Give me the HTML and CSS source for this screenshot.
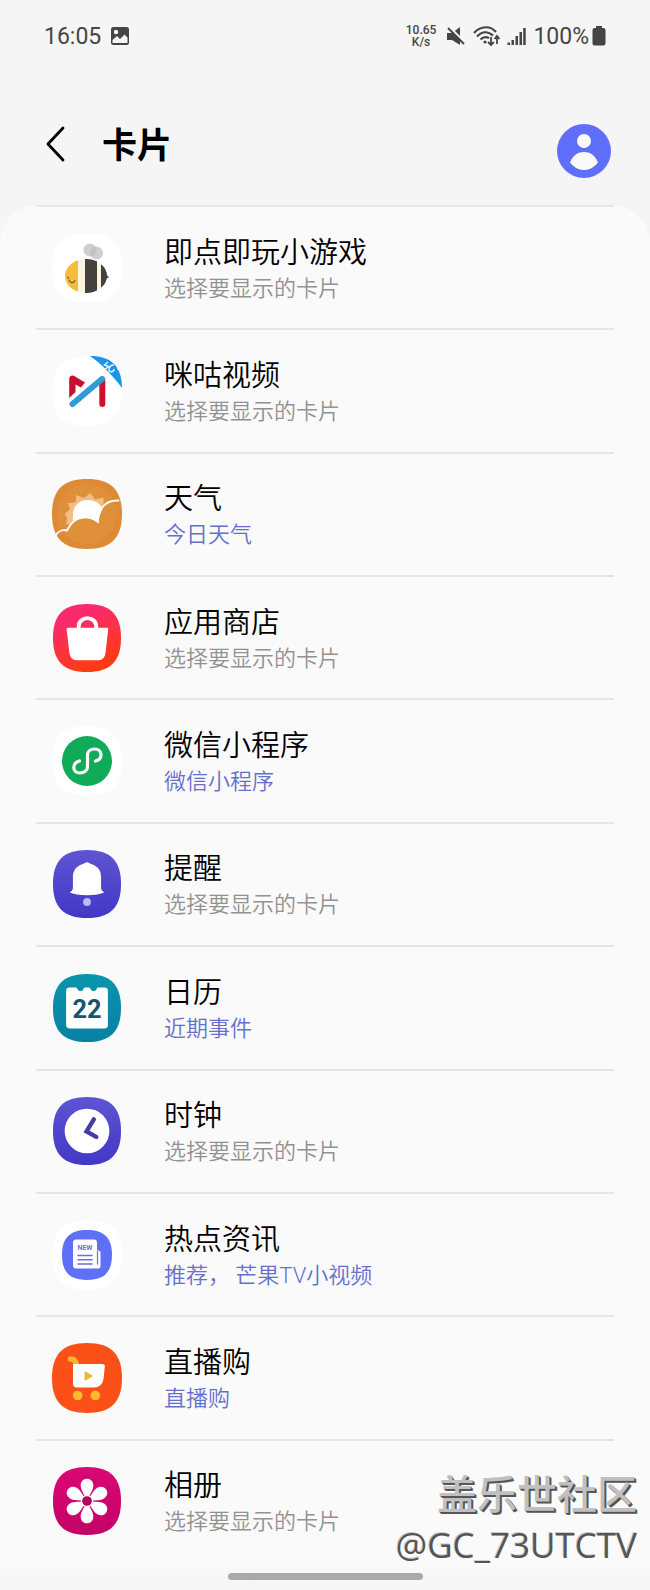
FILE: index.html
```
<!DOCTYPE html>
<html lang="zh-CN">
<head>
  <meta charset="UTF-8">
  <title>卡片</title>
  <meta name="viewport" content="width=device-width, initial-scale=1.0">
  <link rel="stylesheet" href="styles.css">
</head>
<body>

<svg class="defs" width="0" height="0" aria-hidden="true">
  <defs>
    <path id="squircle" d="M35 0C59 0 70 11 70 35S59 70 35 70 0 59 0 35 11 0 35 0Z"/>
    <clipPath id="beeClip"><ellipse cx="34" cy="43" rx="21" ry="17"/></clipPath>
    <clipPath id="sunClip"><path d="M0 0H70V21C60 21 53 25 50 31C48 35 47 38 46 43C36 37 26 38 20 45C17 48 16 50 15 51H0Z"/></clipPath>
    <linearGradient id="storeFill" x1="0" y1="0" x2="0.4" y2="1">
      <stop offset="0.3" stop-color="#fb2a6c"/>
      <stop offset="1" stop-color="#ff3b14"/>
    </linearGradient>
    <linearGradient id="indigoFill" x1="0" y1="0" x2="0" y2="1">
      <stop offset="0" stop-color="#5f54d2"/>
      <stop offset="1" stop-color="#4138c6"/>
    </linearGradient>
    <linearGradient id="tealFill" x1="0" y1="0" x2="0" y2="1">
      <stop offset="0" stop-color="#0a95ad"/>
      <stop offset="1" stop-color="#0781a3"/>
    </linearGradient>
    <linearGradient id="galleryFill" x1="0" y1="0" x2="0" y2="1">
      <stop offset="0" stop-color="#db0874"/>
      <stop offset="1" stop-color="#c30267"/>
    </linearGradient>
  </defs>
</svg>

<div class="screen">
  <div class="status-bar">
    <span class="clock">16:05</span>
    <svg width="20" height="20" viewBox="0 0 20 20">
      <rect x="1" y="1" width="18" height="18" rx="2.500" fill="#454545"/>
      <path d="M2.500 14L7 10l3 3 4.500-4.500 3 3V17H2.500Z" fill="#f5f5f5"/>
      <circle cx="6" cy="6" r="2.200" fill="#f5f5f5"/>
    </svg>
    <div class="status-right">
      <span class="speed"><span>10.65</span><span>K/s</span></span>
      <svg class="mute" width="20" height="20" viewBox="0 0 20 20">
        <path d="M1 7h5l8-6v18l-8-5H1Z" fill="#454545"/>
        <path d="M1-1L20 18" stroke="#f5f5f5" stroke-width="3"/>
        <path d="M2 2L18 18" stroke="#454545" stroke-width="2"/>
      </svg>
      <svg class="wifi" width="28" height="22" viewBox="0 0 28 22">
        <g fill="none" stroke="#454545" stroke-width="2.200">
          <path d="M1 8C7.500 0.500 17.500 0.500 23 7"/>
          <path d="M4 11.500C9 6 15 6 20 10.500"/>
          <path d="M7.500 14.500C10 12 13 11.500 16 13"/>
          <path d="M18 12v8M15 17l3 3 3-3" stroke-width="1.800"/>
          <path d="M24 19v-8M21.500 14l2.500-3 2.500 3" stroke-width="1.800"/>
        </g>
        <circle cx="12" cy="17" r="1.600" fill="#454545"/>
      </svg>
      <svg class="signal" width="19" height="20" viewBox="0 0 19 20">
        <path d="M0.500 16.500h2.500v2.500h-2.500ZM4.500 14h2.500v5H4.500ZM8.500 10h2.500v9H8.500ZM12.500 6h2.500v13h-2.500ZM16.200 2h2.500v17h-2.500Z" fill="#454545"/>
      </svg>
      <span class="percent">100%</span>
      <svg width="14" height="20" viewBox="0 0 14 20">
        <path d="M4 0h6v2h1.500a2 2 0 0 1 2 2v13.500a2 2 0 0 1-2 2h-9a2 2 0 0 1-2-2V4a2 2 0 0 1 2-2H4Z" fill="#454545"/>
      </svg>
    </div>
  </div>

  <header class="header">
    <button class="back" aria-label="返回">
      <svg width="20" height="36" viewBox="0 0 20 36">
        <path d="M17 2L2 18l15 16" fill="none" stroke="#000" stroke-width="2.800" stroke-linecap="round" stroke-linejoin="round"/>
      </svg>
    </button>
    <h1>卡片</h1>
    <button class="avatar" aria-label="账户">
      <svg width="54" height="54" viewBox="0 0 54 54">
        <circle cx="27" cy="27" r="27" fill="#606ffb"/>
        <circle cx="27" cy="17" r="7" fill="#fafafa"/>
        <path d="M13 38.500C16 31 21 28 27 28s11 3 14 10.500C37 43.500 32 46 27 46s-10-2.500-14-7.500Z" fill="#fafafa"/>
      </svg>
    </button>
  </header>

  <ul class="cards">
    <li>
      <a class="card" href="#">
        <svg class="icon" viewBox="0 0 70 70">
          <use href="#squircle" fill="#fff"/>
          <g clip-path="url(#beeClip)">
            <rect x="12" y="25" width="14" height="36" fill="#f8bc3c"/>
            <rect x="26" y="25" width="29" height="36" fill="#fbf5df"/>
            <rect x="33" y="25" width="12" height="36" fill="#45413c"/>
            <rect x="49" y="25" width="7" height="36" fill="#45413c"/>
          </g>
          <path d="M53 40l4 4.500-3 1v3Z" fill="#45413c"/>
          <circle cx="38" cy="17" r="6.500" fill="#bbb" fill-opacity="0.700"/>
          <circle cx="44.500" cy="20" r="6.500" fill="#bbb" fill-opacity="0.700"/>
          <path d="M17 46.500c0.500 4 5.500 4 6 0.500" fill="none" stroke="#8a5a1c" stroke-width="1.200"/>
          <circle cx="16" cy="44.500" r="0.900" fill="#8a5a1c"/>
        </svg>
        <span class="text"><span class="name">即点即玩小游戏</span><span class="hint">选择要显示的卡片</span></span>
      </a>
    </li>
    <li>
      <a class="card" href="#">
        <svg class="icon" viewBox="0 0 70 70">
          <use href="#squircle" fill="#fff"/>
          <path d="M38 0C59 0 70 10 70 32C62 21 51 9 38 0Z" fill="#1b94e8"/>
          <path d="M56 6l-3.500 3 4 1.500-4.500 3.500M62 9c-3 0-5 2-5 5 1 3 5 2 5-1M65 13h2" fill="none" stroke="#e3f3ff" stroke-width="1.500"/>
          <path d="M17.200 23.500C17 20 20 18.500 23 20.500L33 26.500 29 31.500 23.500 28.500V36L17.200 42Z" fill="#c80f2c"/>
          <path d="M50.300 24V48" stroke="#d0102a" stroke-width="6" stroke-linecap="round"/>
          <path d="M20.500 48L50 23" stroke="#2f9bd8" stroke-width="6" stroke-linecap="round"/>
        </svg>
        <span class="text"><span class="name">咪咕视频</span><span class="hint">选择要显示的卡片</span></span>
      </a>
    </li>
    <li>
      <a class="card" href="#">
        <svg class="icon" viewBox="0 0 70 70">
          <use href="#squircle" fill="#dd8a35"/>
          <circle cx="35" cy="35" r="30" fill="#e39440" fill-opacity="0.500"/>
          <g clip-path="url(#sunClip)">
            <path d="M38.500 14l4.500 6.500 8.500-2v8l6 6-8 12H20l-6 1 1-6-2-5 5-4-2-6.500 7.500-0.500 1-7.500 7.500 3Z" fill="#f3bd88"/>
            <path d="M21 45V36C21 27 27 21 35.500 21C44 21 50 26 50.500 31L46 43Z" fill="#fff"/>
          </g>
          <path d="M3.500 56.500C7 51.500 10 50.500 15 51.500C19 43 25 39 31 38.500C37 38 42 40 46 43C46 31 52 21 66.500 21.500" fill="none" stroke="#fff" stroke-width="1.800" stroke-linecap="round"/>
        </svg>
        <span class="text"><span class="name">天气</span><span class="hint chosen">今日天气</span></span>
      </a>
    </li>
    <li>
      <a class="card" href="#">
        <svg class="icon" viewBox="-1 -1 72 72">
          <use href="#squircle" fill="url(#storeFill)"/>
          <path d="M15.500 24.500H55.500Q57 24.500 56.800 26L54 51Q53 57.500 47 58H24Q18 57.500 17 51L14 26Q14 24.500 15.500 24.500Z" fill="#fff"/>
          <path d="M26.500 25V23a9 8.500 0 0 1 18 0v2" fill="none" stroke="#fff" stroke-width="4"/>
        </svg>
        <span class="text"><span class="name">应用商店</span><span class="hint">选择要显示的卡片</span></span>
      </a>
    </li>
    <li>
      <a class="card" href="#">
        <svg class="icon" viewBox="0 0 70 70">
          <use href="#squircle" fill="#fff"/>
          <circle cx="35" cy="35" r="25" fill="#0fab58"/>
          <path d="M43.500 35C47.500 34 49 31.500 49 28.800C49 25.500 46.500 23 42.500 23C38.500 23 35.500 25.500 35.500 29V41C35.500 44.500 32 47 28 47C24.500 47 21.800 45 21.800 41.500C21.800 38 24 36 27.500 35" fill="none" stroke="#fff" stroke-width="3.200" stroke-linecap="round"/>
        </svg>
        <span class="text"><span class="name">微信小程序</span><span class="hint chosen">微信小程序</span></span>
      </a>
    </li>
    <li>
      <a class="card" href="#">
        <svg class="icon" viewBox="-1 -1 72 72">
          <use href="#squircle" fill="url(#indigoFill)"/>
          <path d="M31 14.500Q35 10.500 39 14.500C46 16.500 49.500 21 49.500 28V39Q49.500 42 53 43.500C49 45.500 43 46.500 35 46.500S21 45.500 17 43.500Q20.500 42 20.500 39V28C20.500 21 24 16.500 31 14.500Z" fill="#fff"/>
          <circle cx="35" cy="53.500" r="4" fill="#bdb9f8"/>
        </svg>
        <span class="text"><span class="name">提醒</span><span class="hint">选择要显示的卡片</span></span>
      </a>
    </li>
    <li>
      <a class="card" href="#">
        <svg class="icon" viewBox="-1 -1 72 72">
          <use href="#squircle" fill="url(#tealFill)"/>
          <path d="M17 14H23.500Q25 14 25 15.500A3.500 3.500 0 0 0 31.500 15.500Q31.500 14 33 14H37Q38.500 14 38.500 15.500A3.500 3.500 0 0 0 45 15.500Q45 14 46.500 14H53Q56.500 14 56.500 17.500V52.500Q56.500 56 53 56H17.500Q13.500 56 13.500 52.500V17.500Q13.500 14 17 14Z" fill="#fff"/>
          <text class="day" x="35" y="45" text-anchor="middle">22</text>
        </svg>
        <span class="text"><span class="name">日历</span><span class="hint chosen">近期事件</span></span>
      </a>
    </li>
    <li>
      <a class="card" href="#">
        <svg class="icon" viewBox="-1 -1 72 72">
          <use href="#squircle" fill="url(#indigoFill)"/>
          <circle cx="35" cy="35" r="23" fill="#fff"/>
          <path d="M42 23L34.500 35.500 44.500 41" fill="none" stroke="#463ba4" stroke-width="4.500" stroke-linecap="round"/>
        </svg>
        <span class="text"><span class="name">时钟</span><span class="hint">选择要显示的卡片</span></span>
      </a>
    </li>
    <li>
      <a class="card" href="#">
        <svg class="icon" viewBox="0 0 70 70">
          <use href="#squircle" fill="#fff"/>
          <use href="#squircle" transform="translate(10 10) scale(0.714)" fill="#5f6ff6"/>
          <rect x="42" y="30.500" width="6.500" height="18" rx="2" fill="#fff"/>
          <rect x="21" y="19.500" width="24" height="29" rx="3" fill="#fff"/>
          <path d="M45.500 31V44.500" stroke="#5f6ff6" stroke-width="1.200"/>
          <text class="news" x="33" y="30" text-anchor="middle">NEW</text>
          <path d="M26 35.500H40M26 39.800H40M26 44H40" stroke="#6a72d8" stroke-width="1.600" stroke-linecap="round"/>
        </svg>
        <span class="text"><span class="name">热点资讯</span><span class="hint chosen">推荐， 芒果TV小视频</span></span>
      </a>
    </li>
    <li>
      <a class="card" href="#">
        <svg class="icon" viewBox="0 0 70 70">
          <use href="#squircle" fill="#fb5118"/>
          <path d="M18.500 16Q23.500 16 24.500 22" fill="none" stroke="#fbb42c" stroke-width="5.500" stroke-linecap="round"/>
          <path d="M21 21H50.500Q53 21 52.800 23.500L51.500 36Q50 44.500 42 44.500H25Q21 44.500 21 40.500Z" fill="#fff"/>
          <path d="M33.500 29.500v7l6-3.500Z" fill="#e8b93a" stroke="#e8b93a" stroke-width="2" stroke-linejoin="round"/>
          <circle cx="25.700" cy="52.500" r="4.800" fill="#fcba30"/>
          <circle cx="43.300" cy="52.500" r="4.800" fill="#fcba30"/>
        </svg>
        <span class="text"><span class="name">直播购</span><span class="hint chosen">直播购</span></span>
      </a>
    </li>
    <li>
      <a class="card" href="#">
        <svg class="icon" viewBox="-1 -1 72 72">
          <use href="#squircle" fill="url(#galleryFill)"/>
          <g fill="#fff">
            <path id="petal" d="M35 12C39 12 41.500 15 41.500 19C41.500 24 37.500 28 36.500 33H33.500C32.500 28 28.500 24 28.500 19C28.500 15 31 12 35 12Z"/>
            <use href="#petal" transform="rotate(60 35 35)"/>
            <use href="#petal" transform="rotate(120 35 35)"/>
            <use href="#petal" transform="rotate(180 35 35)"/>
            <use href="#petal" transform="rotate(240 35 35)"/>
            <use href="#petal" transform="rotate(300 35 35)"/>
            <circle cx="35" cy="35" r="6"/>
          </g>
          <circle cx="35" cy="35" r="5" fill="#b3085c"/>
        </svg>
        <span class="text"><span class="name">相册</span><span class="hint">选择要显示的卡片</span></span>
      </a>
    </li>
  </ul>

  <div class="nav-bar"><span class="nav-handle"></span></div>

  <div class="watermark">
    <span class="site">盖乐世社区</span>
    <span class="user">@GC_73UTCTV</span>
  </div>
</div>

</body>
</html>
```
FILE: styles.css
```
* {
  box-sizing: border-box;
}
body {
  margin: 0;
  background: #f5f5f5;
  color: #000;
  font-family: "Noto Sans CJK SC", sans-serif;
}
.defs {
  position: absolute;
}
svg {
  display: block;
  flex-shrink: 0;
}
button {
  padding: 0;
  border: none;
  background: none;
  cursor: pointer;
}
.screen {
  position: relative;
  min-height: 100vh;
  display: flex;
  flex-direction: column;
}

/* status bar */
.status-bar {
  display: flex;
  align-items: center;
  gap: 9px;
  height: 72px;
  padding: 0 44px;
  color: #454545;
  font-family: Roboto, sans-serif;
  font-size: 23px;
}
.status-right {
  display: flex;
  align-items: center;
  margin-left: auto;
}
.speed {
  display: flex;
  flex-direction: column;
  align-items: center;
  font-size: 12px;
  line-height: 12px;
  font-weight: 500;
}
.mute {
  margin-left: 10px;
}
.wifi {
  margin-left: 7px;
}
.signal {
  margin: 0 7px 0 6px;
}
.percent {
  margin-right: 3px;
}

/* title row */
.header {
  display: flex;
  align-items: center;
  height: 133px;
  padding: 24px 39px 0 46px;
}
.back {
  padding-bottom: 14px;
}
h1 {
  flex: 1;
  margin: 0 0 16px 36px;
  font-size: 35px;
  line-height: 48px;
  font-weight: 700;
}

/* card list */
.cards {
  flex: 1;
  display: flex;
  flex-direction: column;
  margin: 0;
  padding: 0 36px;
  list-style: none;
  background: #fafafa;
  border-radius: 38px 38px 0 0;
}
.cards li {
  flex: 1;
  display: flex;
  border-top: 2px solid #e5e5e5;
}
.card {
  flex: 1;
  display: flex;
  align-items: center;
  gap: 42px;
  padding-left: 16px;
  color: inherit;
  text-decoration: none;
}
.icon {
  width: 70px;
  height: 70px;
}
.text {
  display: flex;
  flex-direction: column;
  padding-top: 2px;
  font-family: Roboto, "Noto Sans CJK SC", sans-serif;
  font-weight: 350;
}
.name {
  font-size: 29px;
  line-height: 40px;
}
.hint {
  color: #929292;
  font-size: 22px;
  line-height: 32px;
}
.hint.chosen {
  color: #6470cc;
}
.day {
  fill: #14566e;
  font-family: Roboto, sans-serif;
  font-size: 26px;
  font-weight: 700;
}
.news {
  fill: #6a72d8;
  font-family: Roboto, sans-serif;
  font-size: 7px;
  font-weight: 700;
}

/* gesture bar */
.nav-bar {
  display: flex;
  align-items: center;
  justify-content: center;
  height: 28px;
  background: linear-gradient(#fafafa, #f5f5f5);
}
.nav-handle {
  width: 30%;
  height: 7px;
  border-radius: 4px;
  background: #a9a9a9;
}

.watermark {
  position: absolute;
  right: 13px;
  bottom: 21px;
  display: flex;
  flex-direction: column;
  align-items: flex-end;
  pointer-events: none;
}
.site {
  color: #c0c0c0;
  font-size: 40px;
  line-height: 58px;
  font-weight: 500;
  text-shadow: 1px 1px 0 #555, 2px 2px 0 #555;
}
.user {
  color: #555;
  font-family: "Open Sans", sans-serif;
  font-size: 35px;
  line-height: 48px;
  text-shadow: -1px -1px 0 #ccc;
}
```
